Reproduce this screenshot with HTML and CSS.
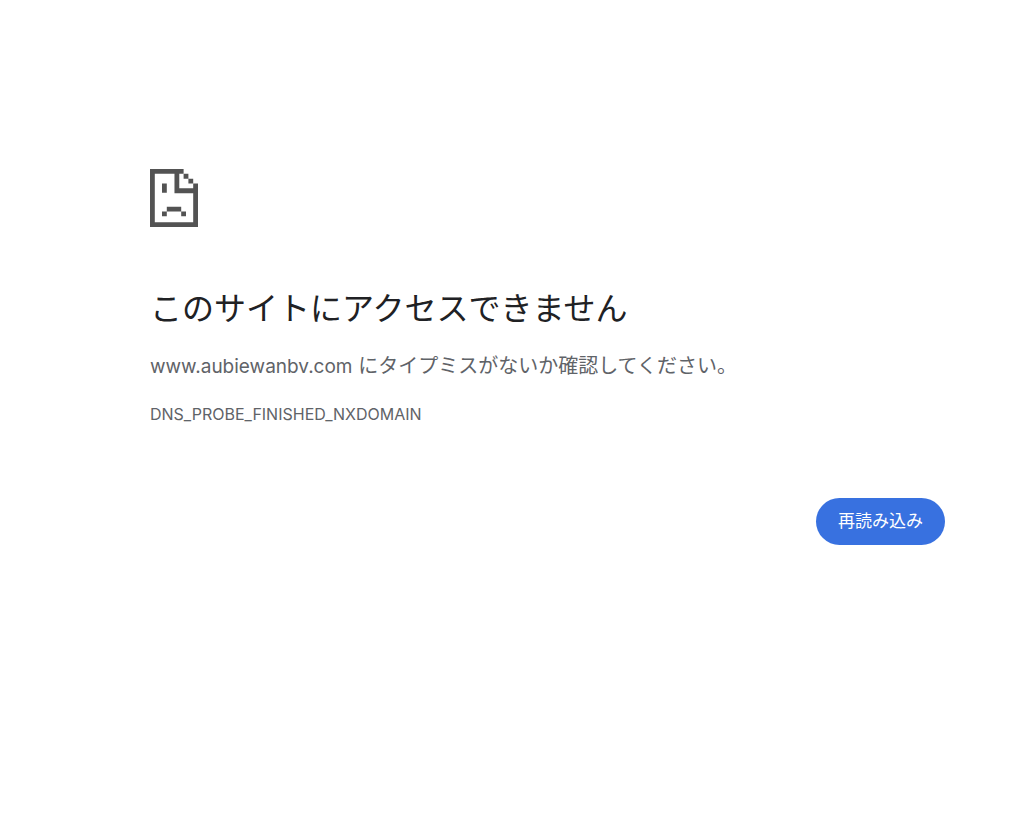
FILE: index.html
```html
<!DOCTYPE html>
<html lang="ja">
<head>
  <meta charset="UTF-8">
  <meta name="viewport" content="width=device-width, initial-scale=1.0">
  <title>www.aubiewanbv.com</title>
  <link rel="stylesheet" href="styles.css">
</head>
<body>
  <main class="error-page">
    <!-- Sad page icon -->
    <svg class="error-icon" viewBox="0 0 100 120" preserveAspectRatio="none" aria-hidden="true">
      <path d="M0 0H70V10H61V40H90V30H100V120H0ZM10 10V110H90V50H51V10Z" fill-rule="evenodd"/>
      <path d="M70 10H80V20H70ZM80 20H90V30H80ZM25 30H35V49H25ZM35 78H65V88H35ZM25 88H35V98H25ZM65 88H75V98H65Z"/>
    </svg>

    <!-- Message -->
    <h1>このサイトにアクセスできません</h1>
    <p class="summary"><span class="host">www.aubiewanbv.com</span> にタイプミスがないか確認してください。</p>
    <p class="error-code">DNS_PROBE_FINISHED_NXDOMAIN</p>

    <!-- Buttons -->
    <div class="buttons">
      <button type="button" class="reload-btn" onclick="location.reload()">再読み込み</button>
    </div>
  </main>
</body>
</html>
```
FILE: styles.css
```css
* {
  margin: 0;
  padding: 0;
  box-sizing: border-box;
}

body {
  background: #fff;
  color: #5f6368;
  font-family: Inter, "Noto Sans CJK JP", sans-serif;
}

.error-page {
  margin-left: 150px;
  margin-right: 79px;
  padding-top: 169px;
}

.error-icon {
  display: block;
  width: 48px;
  height: 58px;
  margin-bottom: 58px;
  fill: #535353;
}

/* Message */
h1 {
  color: #202124;
  font-size: 32px;
  font-weight: 400;
  line-height: 48px;
  margin-bottom: 18px;
}

.summary {
  font-size: 20px;
  line-height: 30px;
  margin-bottom: 20px;
}

.host {
  font-size: 19px;
}

.error-code {
  font-size: 16px;
  line-height: 24px;
}

/* Buttons */
.buttons {
  display: flex;
  justify-content: flex-end;
  margin-top: 72px;
}

.reload-btn {
  background: #3871e0;
  border: none;
  border-radius: 24px;
  color: #fff;
  cursor: pointer;
  font-family: inherit;
  font-size: 17px;
  line-height: 23px;
  padding: 12px 22px;
}
```
